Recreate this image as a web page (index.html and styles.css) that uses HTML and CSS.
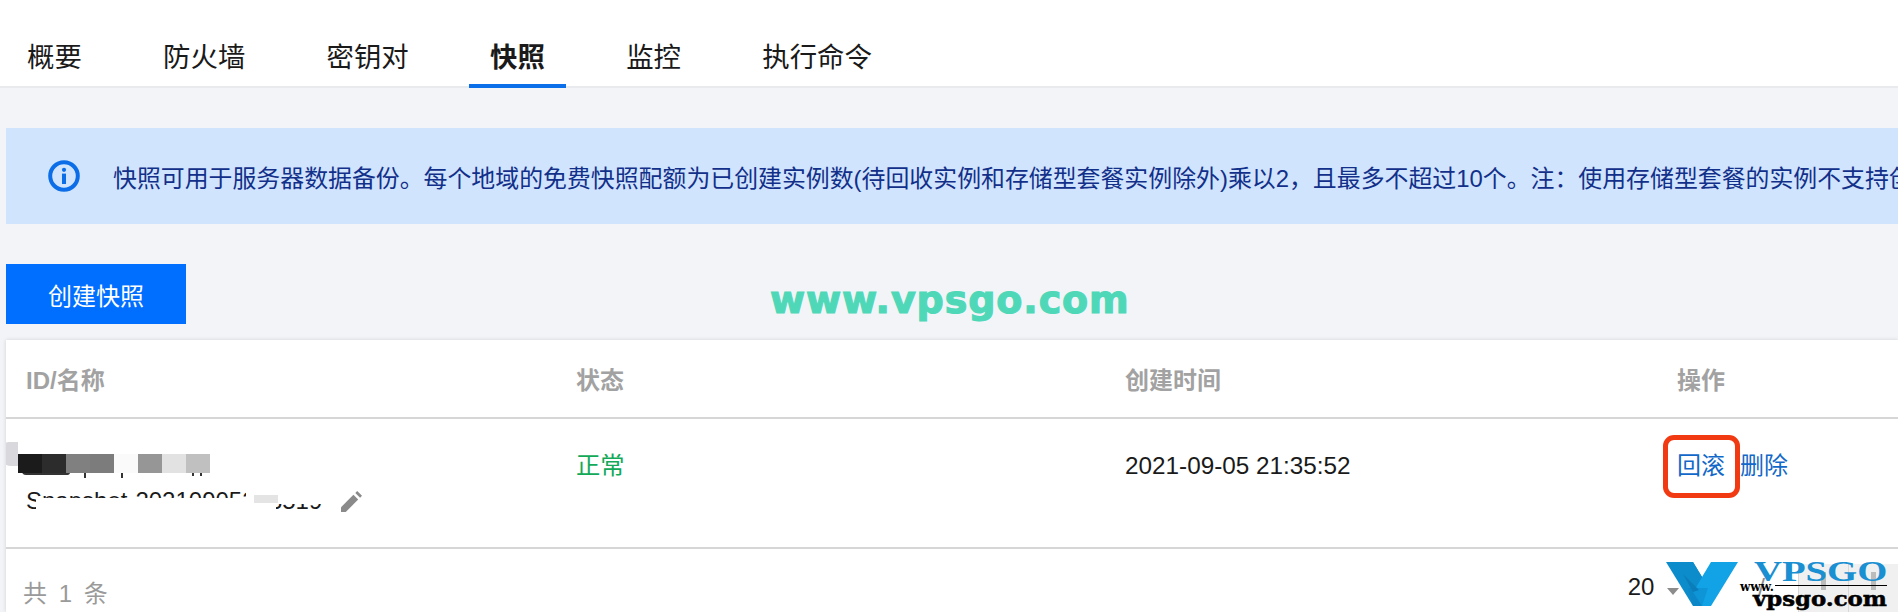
FILE: index.html
```html
<!DOCTYPE html>
<html lang="zh-CN">
<head>
    <meta charset="UTF-8">
    <meta name="viewport" content="width=device-width, initial-scale=1.0">
    <title>快照</title>
    <link rel="stylesheet" href="styles.css">
</head>
<body>
    <nav class="tabs">
        <a class="tab">概要</a>
        <a class="tab">防火墙</a>
        <a class="tab">密钥对</a>
        <a class="tab active">快照</a>
        <a class="tab">监控</a>
        <a class="tab">执行命令</a>
    </nav>

    <main class="content">
        <div class="notice">
            <svg class="notice-icon" viewBox="0 0 32 32" aria-hidden="true">
                <circle cx="16" cy="16" r="13.8" fill="none" stroke="#0b6ee8" stroke-width="4"/>
                <circle cx="16" cy="9.8" r="2.1" fill="#0b6ee8"/>
                <rect x="14" y="13.6" width="4" height="10.4" fill="#0b6ee8"/>
            </svg>
            <p class="notice-text">快照可用于服务器数据备份。每个地域的免费快照配额为已创建实例数(待回收实例和存储型套餐实例除外)乘以2&#65292;且最多不超过10个。注&#65306;使用存储型套餐的实例不支持创建快照</p>
        </div>

        <button class="create-btn">创建快照</button>

        <section class="card">
            <div class="row head">
                <div>ID/名称</div>
                <div>状态</div>
                <div>创建时间</div>
                <div>操作</div>
            </div>

            <div class="row body-row">
                <div class="name-cell">
                    <div class="name-line">&nbsp;</div>
                    <div class="name-line">Snapshot-20210905213519
                        <svg class="pencil" viewBox="0 0 22 22" aria-hidden="true">
                            <path d="M0 22v-5L13 4l5 5L5 22z" fill="#8a8a8a"/>
                            <path d="M15 2l2-2 5 5-2 2z" fill="#8a8a8a"/>
                        </svg>
                    </div>
                </div>
                <div class="status-ok">正常</div>
                <div>2021-09-05 21:35:52</div>
                <div class="actions">
                    <a class="link rollback">回滚</a>
                    <a class="link">删除</a>
                </div>

                <!-- mosaic that hides the instance name -->
                <div class="redact">
                    <span class="blob"></span>
                    <span class="tick tick-a"></span>
                    <span class="tick tick-b"></span>
                    <span class="tick tick-c"></span>
                    <span class="tick tick-d"></span>
                    <span class="arc"></span>
                    <div class="mosaic">
                        <i class="m1"></i><i class="m2"></i><i class="m3"></i><i class="m4"></i>
                        <i class="m5"></i><i class="m6"></i><i class="m7"></i><i class="m8"></i>
                    </div>
                    <span class="wipe wipe-a"></span>
                    <span class="wipe wipe-b"></span>
                    <span class="wipe wipe-c"></span>
                </div>
            </div>

            <div class="footer">
                <div class="total">共 1 条</div>
                <div class="pager">
                    <span class="page-size">20</span>
                    <span class="caret"></span>
                    <span class="page-sep">/</span>
                    <span class="page-btn"><i></i></span>
                    <span class="page-btn"><i></i></span>
                </div>
            </div>
        </section>
    </main>

    <!-- overlays from the screenshot -->
    <div class="watermark">www.vpsgo.com</div>
    <div class="logo">
        <svg class="logo-v" viewBox="0 0 72 44" aria-hidden="true">
            <path d="M0 0h27l17 28-8 16h-9z" fill="#0d8ccc"/>
            <path d="M72 0H45L27 30l9 14h9z" fill="#12a3e6"/>
            <path d="M27 0l9 15-9 15z" fill="#0d8ccc"/>
            <path d="M17 12l16 16-6 2z" fill="#0b7db8"/>
            <path d="M22 26h20l-6 18h-9z" fill="#0a7cb9" opacity="0.35"/>
        </svg>
        <span class="logo-name">VPSGO</span>
        <span class="logo-www">www.</span>
        <span class="logo-rule"></span>
        <span class="logo-domain">vpsgo.com</span>
    </div>
</body>
</html>
```

FILE: styles.css
```css
html, body {
    margin: 0;
    height: 100%;
    overflow: hidden;
}

body {
    position: relative;
    background-color: #f2f4f8;
    color: #1a1a1a;
    font-family: 'Liberation Sans', 'Noto Sans CJK SC', sans-serif;
    font-size: 24px;
}

.tabs {
    display: flex;
    gap: 39.3px;
    height: 86px;
    padding-left: 6px;
    background-color: #ffffff;
    border-bottom: 2px solid #e8eaee;
}

.tab {
    height: 88px;
    padding: 0 21px;
    box-sizing: border-box;
    font-size: 27.4px;
    line-height: 116px;
    color: #1a1a1a;
}

.tab.active {
    font-weight: 700;
    border-bottom: 4px solid #0a6fe8;
}

.content {
    padding: 40px 0 0 6px;
}

.notice {
    display: flex;
    align-items: center;
    height: 96px;
    padding-left: 42px;
    background-color: #d1e4fd;
    overflow: hidden;
}

.notice-icon {
    flex: none;
    width: 32px;
    height: 32px;
    margin-right: 33px;
}

.notice-text {
    margin: 0;
    white-space: nowrap;
    color: #12308a;
    font-size: 23.9px;
}

.create-btn {
    display: block;
    width: 180px;
    height: 60px;
    margin-top: 40px;
    padding: 0;
    border: none;
    background-color: #006eff;
    color: #ffffff;
    font-family: inherit;
    font-size: 24px;
}

.card {
    margin-top: 16px;
    height: 272px;
    overflow: hidden;
    background-color: #ffffff;
    box-shadow: 0 0 4px rgba(0, 0, 0, 0.14);
}

.row {
    position: relative;
    display: grid;
    grid-template-columns: 550px 549px 552px 1fr;
    padding-left: 20px;
    border-bottom: 2px solid #d6d6d6;
}

.head {
    height: 77px;
    align-items: center;
    font-size: 24px;
    font-weight: 700;
    color: #a2a2a2;
}

.body-row {
    height: 99px;
    padding-top: 29px;
    align-items: start;
    font-size: 24.3px;
    line-height: 36px;
}

.name-cell {
    margin-top: -1px;
    font-size: 24px;
}

.name-line {
    height: 36px;
    white-space: nowrap;
}

.pencil {
    width: 21px;
    height: 21px;
    margin-left: 12px;
    vertical-align: -3px;
}

.status-ok {
    color: #12a958;
}

.actions {
    display: flex;
    align-items: flex-start;
    gap: 15px;
    font-size: 24px;
}

.link {
    color: #1268c8;
}

.rollback {
    position: relative;
}

/* red marker drawn around the rollback link */
.rollback::after {
    content: "";
    position: absolute;
    left: -14px;
    right: -15px;
    top: -13px;
    bottom: -14px;
    border: 5px solid #f13a12;
    border-radius: 11px;
}

.redact {
    position: absolute;
    left: 0;
    top: 0;
    width: 340px;
    height: 128px;
}

.redact span,
.mosaic {
    position: absolute;
}

.blob {
    left: -5px;
    top: 23px;
    width: 17px;
    height: 24px;
    background-color: #d9d9dd;
    border-radius: 8px 0 0 10px;
}

.mosaic {
    left: 12px;
    top: 35px;
    display: flex;
    height: 19px;
}

.mosaic i {
    width: 24px;
    height: 100%;
}

.m1 { background-color: #1b1b1b; }
.m2 { background-color: #2c2c2c; }
.m3 { background-color: #808080; }
.m4 { background-color: #7c7c7c; }
.m5 { background-color: #fafafa; }
.m6 { background-color: #969696; }
.m7 { background-color: #e2e2e2; }
.m8 { background-color: #c0c0c0; }

.tick {
    width: 2px;
    background-color: #333333;
}

.tick-a { left: 78px; top: 50px; height: 9px; }
.tick-b { left: 115px; top: 50px; height: 9px; }
.tick-c { left: 186px; top: 50px; height: 7px; }
.tick-d { left: 194px; top: 50px; height: 7px; }

.arc {
    left: 16px;
    top: 52px;
    width: 48px;
    height: 4px;
    background-color: #333333;
    border-radius: 0 0 8px 12px;
}

.wipe {
    background-color: #ffffff;
}

.wipe-a { left: 30px; top: 79px; width: 240px; height: 16px; }
.wipe-b { left: 240px; top: 68px; width: 84px; height: 17px; }
.wipe-c { left: 248px; top: 76px; width: 24px; height: 8px; background-color: #e4e4e4; }

.footer {
    display: flex;
    justify-content: space-between;
    height: 63px;
    padding-left: 17px;
}

.total {
    padding-top: 25px;
    color: #9a9a9a;
    word-spacing: 5px;
}

.pager {
    display: flex;
    align-items: flex-start;
}

.page-size {
    margin-top: 24px;
    color: #1a1a1a;
}

.caret {
    margin: 39px 0 0 13px;
    border-top: 7px solid #8c8c8c;
    border-left: 6px solid transparent;
    border-right: 6px solid transparent;
}

.page-sep {
    margin: 24px 33px 0 79px;
    color: #8c8c8c;
}

.page-btn {
    display: flex;
    justify-content: center;
    width: 49px;
    height: 48px;
    margin-top: 15px;
    background-color: #f0f0f0;
    border-left: 1px solid #d8d8d8;
}

.page-btn i {
    width: 5px;
    height: 18px;
    margin-top: 8px;
    background-color: #bcbcbc;
}

.watermark {
    position: absolute;
    left: 770px;
    top: 275px;
    font-family: 'DejaVu Sans', sans-serif;
    font-size: 38px;
    line-height: 50px;
    font-weight: 700;
    letter-spacing: 0.9px;
    color: #4fd8b8;
    -webkit-text-stroke: 1.2px #4fd8b8;
}

.logo {
    position: absolute;
    left: 1666px;
    top: 556px;
    width: 232px;
    height: 56px;
}

.logo span {
    position: absolute;
    white-space: nowrap;
}

.logo-v {
    position: absolute;
    left: 0;
    top: 6px;
    width: 72px;
    height: 44px;
}

.logo-name {
    left: 88px;
    top: 0;
    font-family: 'Liberation Serif', serif;
    font-size: 30px;
    line-height: 30px;
    font-weight: 700;
    color: #1a8fd1;
    transform: scaleX(1.29);
    transform-origin: left top;
}

.logo-www {
    left: 74px;
    top: 24px;
    font-family: 'DejaVu Serif', serif;
    font-size: 12px;
    line-height: 14px;
    font-weight: 700;
    color: #000000;
}

.logo-rule {
    left: 109px;
    top: 29px;
    width: 112px;
    height: 1px;
    background-color: #000000;
}

.logo-domain {
    left: 87px;
    top: 31px;
    font-family: 'DejaVu Serif', serif;
    font-size: 20px;
    line-height: 24px;
    font-weight: 700;
    color: #000000;
    -webkit-text-stroke: 0.5px #000000;
    transform: scaleX(1.14);
    transform-origin: left top;
}
```
